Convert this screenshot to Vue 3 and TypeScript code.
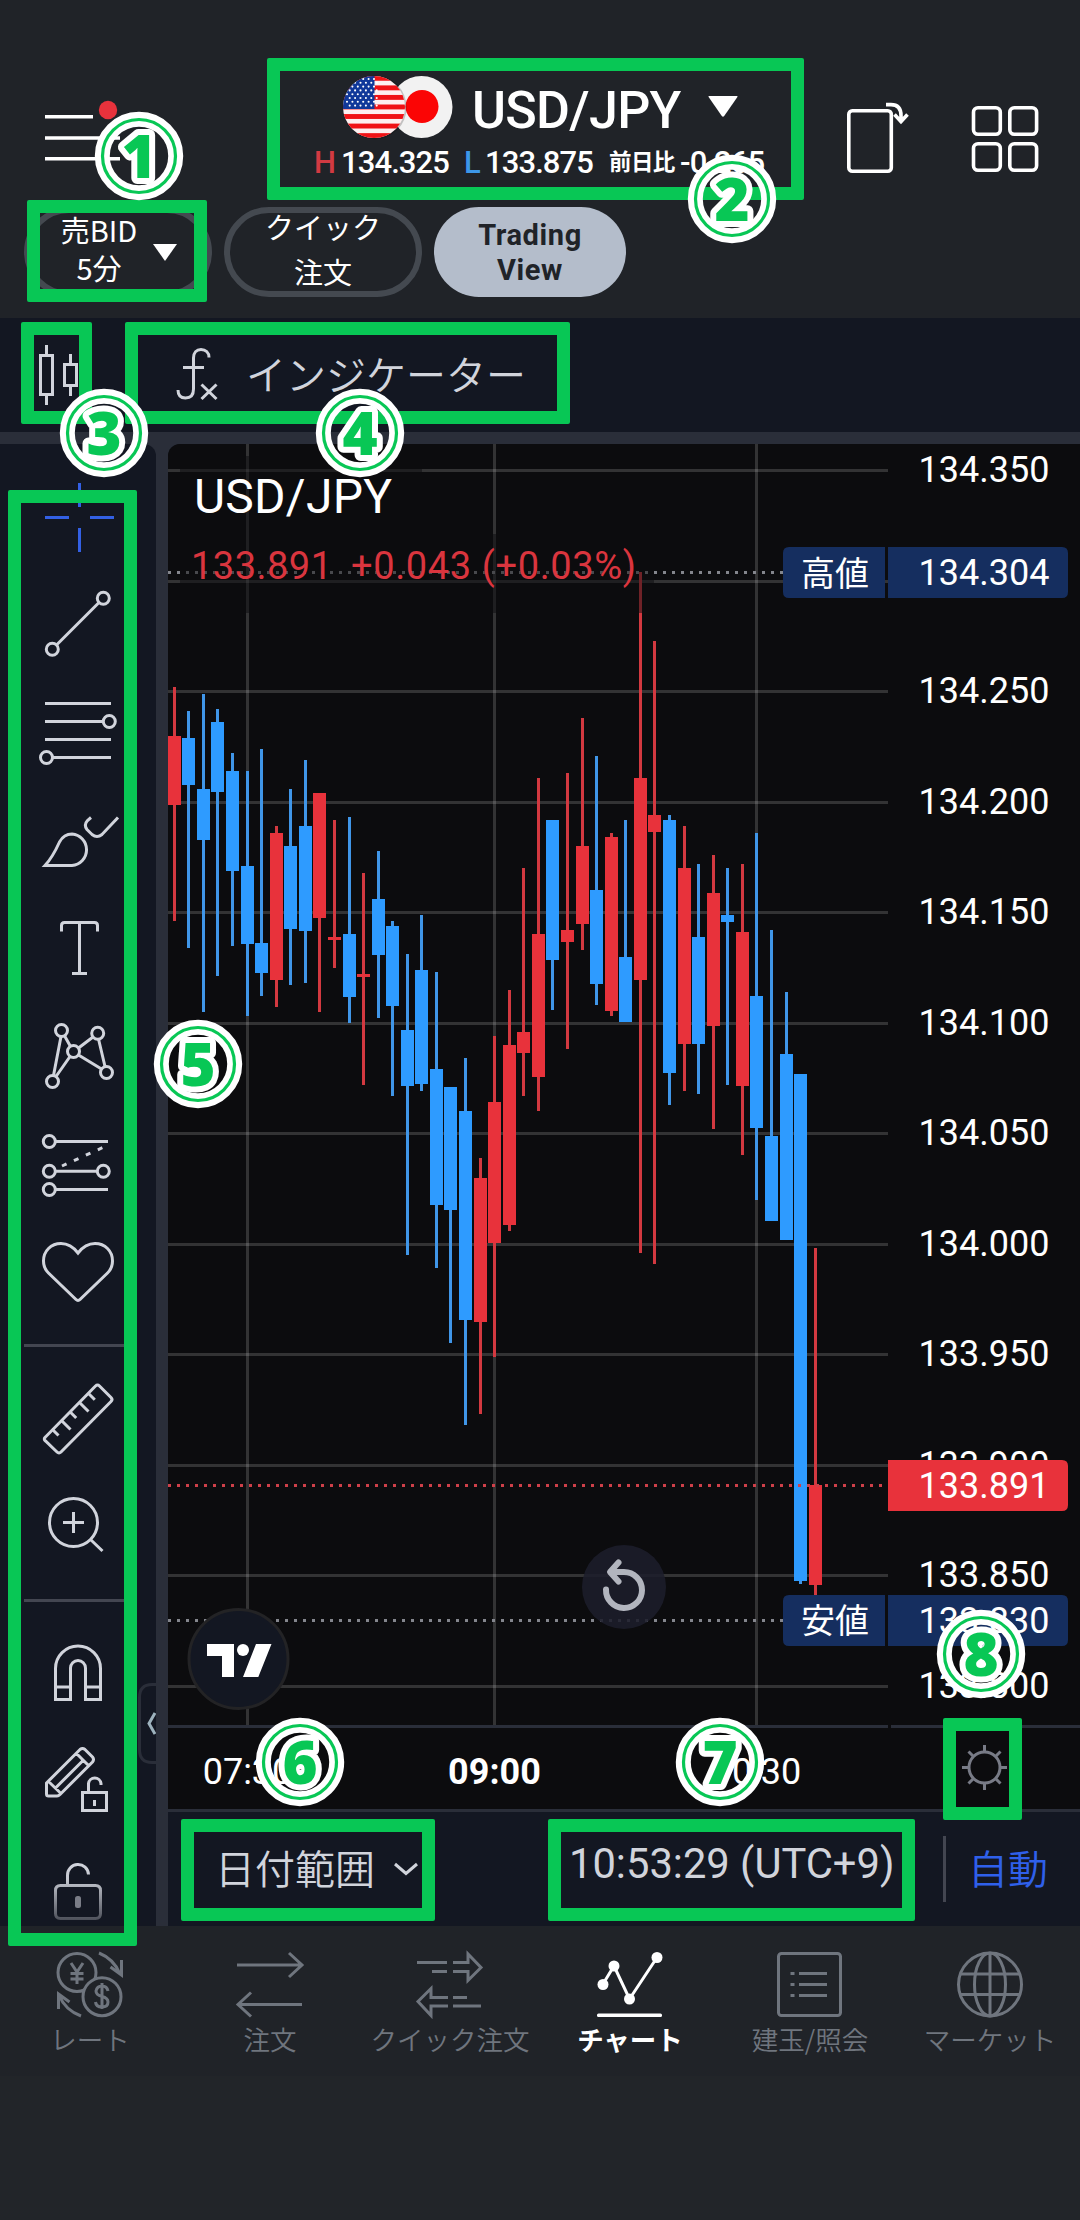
<script setup lang="ts">
type Candle = [x: number, high: number, top: number, bottom: number, low: number, up: 0 | 1]

const candles: Candle[] = [
  [174.5, 687, 736, 805, 921, 1], [188.5, 711, 738, 785, 948, 0], [203.5, 694, 789, 840, 1012, 0],
  [217.5, 709, 722, 792, 976, 0], [232.5, 753, 771, 871, 946, 0], [247.5, 771, 866, 944, 1016, 0],
  [261.5, 749, 943, 973, 996, 0], [276.5, 826, 833, 980, 1007, 1], [290.5, 789, 846, 929, 985, 0],
  [305.5, 760, 826, 931, 983, 0], [319.5, 793, 793, 918, 1012, 1], [334.5, 820, 937, 940, 968, 1],
  [349.5, 817, 934, 997, 1023, 0], [363.5, 873, 974, 977, 1085, 1], [378.5, 851, 899, 955, 1018, 0],
  [392.5, 921, 926, 1006, 1096, 0], [407.5, 954, 1030, 1086, 1255, 0], [421.5, 915, 970, 1084, 1091, 0],
  [436.5, 972, 1069, 1205, 1268, 0], [450.5, 1087, 1087, 1210, 1343, 0], [465.5, 1058, 1111, 1320, 1425, 0],
  [480.5, 1158, 1178, 1322, 1414, 1], [494.5, 1036, 1102, 1243, 1357, 1], [509.5, 990, 1045, 1225, 1231, 1],
  [523.5, 868, 1032, 1053, 1096, 1], [538.5, 778, 934, 1077, 1111, 1], [552.5, 820, 820, 960, 1010, 0],
  [567.5, 773, 930, 942, 1049, 1], [582.5, 718, 846, 924, 950, 1], [596.5, 756, 890, 984, 1005, 0],
  [611.5, 833, 837, 1011, 1016, 1], [625.5, 820, 957, 1022, 1022, 0], [640.5, 572, 778, 980, 1253, 1],
  [654.5, 641, 815, 832, 1264, 1], [669.5, 815, 820, 1073, 1105, 0], [684.5, 826, 868, 1044, 1091, 1],
  [698.5, 864, 937, 1044, 1094, 0], [713.5, 855, 893, 1026, 1129, 1], [727.5, 868, 915, 922, 1085, 0],
  [742.5, 864, 932, 1086, 1155, 1], [756.5, 833, 996, 1128, 1200, 0], [771.5, 930, 1136, 1221, 1221, 0],
  [786.5, 992, 1054, 1240, 1240, 0], [800.5, 1074, 1074, 1581, 1584, 0], [815.5, 1248, 1485, 1585, 1596, 1],
]

const prices: { y: number; label: string }[] = [
  { y: 470.5, label: '134.350' }, { y: 581.5, label: '' }, { y: 691.5, label: '134.250' },
  { y: 802.5, label: '134.200' }, { y: 912.5, label: '134.150' }, { y: 1023.5, label: '134.100' },
  { y: 1133.5, label: '134.050' }, { y: 1244.5, label: '134.000' }, { y: 1354.5, label: '133.950' },
  { y: 1465.5, label: '133.900' }, { y: 1575.5, label: '133.850' }, { y: 1686.5, label: '133.800' },
]
const times = [
  { x: 247.5, label: '07:30', bold: false },
  { x: 494.5, label: '09:00', bold: true },
  { x: 756.5, label: '10:30', bold: false },
]
const stars: [number, number][] = []
for (let r = 0; r < 8; r++) for (let c = 0; c < 6; c++) stars.push([347 + c * 5.4 + (r % 2) * 2.7, 79 + r * 3.8])

// x, y, width, height of each highlighted area
const frames = [
  [27, 200, 180, 102], [267, 58, 537, 142], [21, 322, 71, 102], [125, 322, 445, 102],
  [8, 490, 129, 1456], [181, 1819, 254, 102], [548, 1819, 367, 102], [943, 1718, 79, 102],
].map(([x, y, w, h]) => ({ left: x + 'px', top: y + 'px', width: w + 'px', height: h + 'px' }))
const badges: [number, number][] = [[139, 156], [732, 199], [104, 433], [360, 433], [198, 1064], [300, 1762], [720, 1762], [981, 1654]]
</script>

<template>
  <div class="screen">
    <header class="header">
      <div class="top">
        <svg class="menu" width="267" height="142" viewBox="0 58 267 142">
          <path d="M45 116.7H93M45 138H120M45 158.7H120" stroke="#fff" stroke-width="3.6" />
          <circle cx="108" cy="110" r="9.2" fill="#e8323c" />
        </svg>
        <div class="pair">
          <div class="pair-name">
            <svg width="118" height="70" viewBox="340 72 118 70">
              <defs><clipPath id="us"><circle cx="374" cy="107" r="31" /></clipPath></defs>
              <circle cx="421.5" cy="107" r="31" fill="#f2f2f2" />
              <circle cx="422" cy="106.5" r="16.5" fill="#fb0505" />
              <circle cx="374.6" cy="107.4" r="32" fill="#0003" />
              <g clip-path="url(#us)">
                <rect x="340" y="72" width="70" height="70" fill="#fdeff0" />
                <rect v-for="i in 7" :key="i" x="340" :y="66.3 + i * 9.55" width="70" height="4.9" fill="#f01216" />
                <rect x="340" y="72" width="34.5" height="37" fill="#10389a" />
                <circle v-for="(s, i) in stars" :key="i" :cx="s[0]" :cy="s[1]" r="1.05" fill="#fff" />
              </g>
            </svg>
            <span class="symbol">USD/JPY</span>
            <svg class="caret" width="30" height="21" viewBox="0 0 30 21"><path d="M1 0H29Q30 0 29.4 1L16.2 20Q15 21.4 13.8 20L.6 1Q0 0 1 0Z" fill="#fff" /></svg>
          </div>
          <div class="pair-stats">
            <span class="hi">H</span><span class="n1">134.325</span><span class="lo">L</span><span class="n2">133.875</span><span class="jp">前日比</span><span class="n3">-0.265</span>
          </div>
        </div>
        <svg width="276" height="142" viewBox="804 58 276 142" fill="none" stroke="#fff" stroke-width="3.6">
          <rect x="848.8" y="110.8" width="42.5" height="60.5" rx="3.5" />
          <path d="M886 104.6h5q10 0 10 11v5M894.5 114.5l6.5 7l6.5 -7" />
          <rect x="973.5" y="107.8" width="26.8" height="26.5" rx="4.5" /><rect x="1009.8" y="107.8" width="26.8" height="26.5" rx="4.5" />
          <rect x="973.5" y="143.8" width="26.8" height="26.5" rx="4.5" /><rect x="1009.8" y="143.8" width="26.8" height="26.5" rx="4.5" />
        </svg>
      </div>
      <div class="pills">
        <div class="pill p1">
          <span>売BID<br />5分</span>
          <svg width="24" height="17" viewBox="0 0 24 17"><path d="M0 0H24L12 17Z" fill="#fff" /></svg>
        </div>
        <div class="pill p2"><span>クイック<br />注文</span></div>
        <div class="pill p3">Trading<br />View</div>
      </div>
    </header>

    <div class="toolbar">
      <svg width="246" height="114" viewBox="0 318 246 114" fill="none" stroke="#d1d4dc" stroke-width="3">
        <path d="M40.5 355.5h12v39h-12zM46.5 345v9M46.5 396v9M64.5 364.5h12v21h-12zM70.5 354v9M70.5 387v9" />
        <path d="M209 357.500c0-5-3.500-8-8-8s-7.500 3-7.500 8.500v31c0 6-3 9-8 9s-7.500-3-7.500-8M183 367.500h21M201.500 384.500l15 14.500M216.500 384.500l-15 14.500" />
      </svg>
      <span>インジケーター</span>
    </div>

    <main class="main">
      <aside class="tools">
        <svg width="156" height="100" viewBox="0 444 156 100"><path d="M79.500 483v24M79.500 528v24M45 517.500h24M90 517.500h24" stroke="#3360e4" stroke-width="3" /></svg>
        <svg width="156" height="130" viewBox="0 544 156 130"><path d="M56.500 645L99 602.500" /><circle cx="103.300" cy="598.300" r="6" /><circle cx="52.300" cy="649.300" r="6" /></svg>
        <svg width="156" height="110" viewBox="0 674 156 110"><path d="M45 703.500h66M45 721.500h58M45 739.500h66M53 757.500h58" /><circle cx="109.300" cy="721.500" r="6" /><circle cx="46.500" cy="757.500" r="6" /></svg>
        <svg width="156" height="120" viewBox="0 784 156 120"><path d="M45 865.500C51 859 55 852 59.500 842C62.500 836.500 67 834 72 834A15.800 15.800 0 0 1 72 865.500ZM91 817.500L87.500 820.500Q83.500 825 87 829.500L92 834.500Q97 838.500 102 834.500L118 817.500" /></svg>
        <svg width="156" height="96" viewBox="0 904 156 96"><path d="M61.500 931.500v-6q0-3 3-3h30q3 0 3 3v6M79.500 922.500v51M72 973.500h15" /></svg>
        <svg width="156" height="110" viewBox="0 1000 156 110"><path d="M61 1036.500L53.500 1075.500M64.500 1035.700L70.500 1046.500M70 1056.500L56 1076.500M78.500 1048L93 1037M98.500 1039L105 1066.500M78.500 1055L101.500 1069" /><circle cx="61.500" cy="1030.500" r="6" /><circle cx="97.700" cy="1033.300" r="6" /><circle cx="73.500" cy="1051.500" r="6" /><circle cx="106.500" cy="1072.500" r="6" /><circle cx="52.500" cy="1081.500" r="6" /></svg>
        <svg width="156" height="110" viewBox="0 1110 156 110"><path d="M56 1141.500h52M56 1171.300h41M56 1189.500h52" /><path d="M62 1166L104 1147" stroke-dasharray="5 8.100" /><circle cx="49.300" cy="1141.500" r="6" /><circle cx="49.300" cy="1171.300" r="6" /><circle cx="103.300" cy="1171.300" r="6" /><circle cx="49.300" cy="1189.500" r="6" /></svg>
        <svg width="156" height="124" viewBox="0 1220 156 124"><path d="M78 1253C73 1246.500 67 1243.500 61 1243.500C51 1243.500 43.500 1251 43.500 1261C43.500 1266 45.500 1270 48.500 1273L76 1299.500Q78 1301.500 80 1299.500L107.500 1273C110.500 1270 112.500 1266 112.500 1261C112.500 1251 105 1243.500 95 1243.500C89 1243.500 83 1246.500 78 1253Z" /></svg>
        <i class="rule"></i>
        <svg width="156" height="123" viewBox="0 1347 156 123"><path d="M95.500 1386Q97.500 1384 99.500 1386L111 1397.500Q113 1399.500 111 1401.500L61 1452Q59 1454 57 1452L45.500 1441Q43 1439 45.500 1437ZM88.300 1393.300l6.500 6.500M79 1402l9.500 9.500M69.700 1411.500l6.500 6.500M61 1420l9.500 9.500M52 1429l6.500 6.500" /></svg>
        <svg width="156" height="129" viewBox="0 1470 156 129"><circle cx="73.500" cy="1522.500" r="24" /><path d="M63 1522.500h21M73.500 1512v21M91 1540l11.500 11" /></svg>
        <i class="rule"></i>
        <svg width="156" height="128" viewBox="0 1602 156 128"><path d="M55.500 1699.500V1668.500a22.500 22.500 0 0 1 45 0V1699.500H85.500V1668a7.500 7.500 0 0 0 -15 0V1699.500ZM55.500 1687h15M85.500 1687h15" /></svg>
        <svg width="156" height="110" viewBox="0 1730 156 110"><path d="M46.500 1783L80 1749.500Q82.500 1747.500 85 1749.500L92.500 1757Q94.500 1759.500 92.500 1762L60 1794.500Q58.500 1796 57 1796H48.500Q46.500 1796 46.500 1794ZM48.500 1781.500L61.500 1794M55.500 1788L83 1760.500M76.500 1753.500L89.500 1766.500M82.500 1792.500h24v18h-24zM88.500 1792v-8.500a6.300 6.300 0 0 1 12.500 0v1.500M94.500 1800v6" /></svg>
        <svg width="156" height="86" viewBox="0 1840 156 86"><defs><linearGradient id="fade" gradientUnits="userSpaceOnUse" x1="0" y1="1864" x2="0" y2="1924"><stop offset="0" stop-color="#d1d4dc" /><stop offset=".25" stop-color="#c5c8d0" /><stop offset="1" stop-color="#42454f" /></linearGradient></defs><path stroke="url(#fade)" d="M60.500 1885.500h35q5 0 5 5v23q0 5-5 5h-35q-5 0-5-5v-23q0-5 5-5zM67.500 1885V1875.500a10.500 10.500 0 0 1 21 -1" /><rect x="75" y="1896" width="6" height="12" rx="2.500" fill="#7a7d87" stroke="none" /></svg>
        <svg class="tab" width="18" height="84" viewBox="138 1681 18 84"><path d="M156 1684.500h-4q-12.500 0-12.500 13v52q0 13 12.500 13h4" stroke="#2a2e39" fill="#131722" /><path d="M155 1713l-6 10.500l6 10.500" stroke="#9db2bd" /></svg>
      </aside>

      <section class="board">
        <svg class="chart" width="912" height="1368" viewBox="168 444 912 1368">
          <rect x="168" y="444" width="912" height="1368" fill="#0c0c0e" />
          <g stroke="#fff" stroke-opacity=".16" stroke-width="3">
            <path v-for="p in prices" :key="p.y" :d="`M168 ${p.y}H888`" />
            <path v-for="t in times" :key="t.x" :d="`M${t.x} 444V1725`" />
          </g>
          <path d="M168 572.500H783" stroke="#84868d" stroke-width="3" stroke-dasharray="3 6" />
          <path d="M168 1620.500H783" stroke="#84868d" stroke-width="3" stroke-dasharray="3 6" />
          <g v-for="c in candles" :key="c[0]">
            <rect :x="c[0] - 1.5" :y="c[1]" width="3" :height="c[4] - c[1]" :fill="c[5] ? '#d33940' : '#4096e8'" />
            <rect :x="c[0] - 6.5" :y="c[2]" width="13" :height="c[3] - c[2]" :fill="c[5] ? '#e8323b' : '#2e9bff'" />
          </g>
          <path d="M168 1485.500H888" stroke="#cf4049" stroke-width="3" stroke-dasharray="3 6" />
          <path d="M180 456H422V534H654V613H180Z" fill="#0c0c0e" fill-opacity=".5" />
          <text x="194" y="512.500" font-size="48" fill="#fff" textLength="198">USD/JPY</text>
          <g font-size="38" fill="#da353e">
            <text x="191" y="578.500" textLength="141">133.891</text>
            <text x="351" y="578.500" textLength="285">+0.043 (+0.03%)</text>
          </g>
          <g font-size="36" fill="#fff" text-anchor="middle">
            <text v-for="p in prices" :key="p.y" x="984" :y="p.y + 11.5">{{ p.label }}</text>
            <path d="M789 547H885V598H789Q783 598 783 592V553Q783 547 789 547ZM888 547H1062Q1068 547 1068 553V592Q1068 598 1062 598H888Z" fill="#152e5f" />
            <path d="M789 1595H885V1646H789Q783 1646 783 1640V1601Q783 1595 789 1595ZM888 1595H1062Q1068 1595 1068 1601V1640Q1068 1646 1062 1646H888Z" fill="#152e5f" />
            <path d="M888 1460H1062Q1068 1460 1068 1466V1505Q1068 1511 1062 1511H888Z" fill="#e8323b" />
            <text x="984" y="585">134.304</text><text x="984" y="1632.500">133.830</text><text x="984" y="1498">133.891</text>
            <g font-size="34"><text x="835" y="585.500">高値</text><text x="835" y="1633">安値</text></g>
            <text v-for="t in times" :key="t.x" :x="t.x" y="1783.700" :font-weight="t.bold ? 700 : 400">{{ t.label }}</text>
          </g>
          <path d="M168 1726.500H888M891 1726.500H1080M168 1810.500H1080" stroke="#2a2e39" stroke-width="3" />
          <circle cx="624" cy="1587" r="42" fill="#1c1e2b" fill-opacity=".88" />
          <path d="M606 1589.500A18 18 0 1 0 624 1572H612M618.500 1562.500L610 1572L618.500 1581.500" fill="none" stroke="#b2b5be" stroke-width="6" stroke-linecap="round" stroke-linejoin="round" />
          <circle cx="238.500" cy="1659" r="49.500" fill="#131722" stroke="#232325" stroke-width="3" />
          <path d="M207 1644h27v33h-12v-21h-15zM256 1644h15.500L258.300 1677H243z" fill="#fff" /><circle cx="243" cy="1650" r="6" fill="#fff" />
          <g transform="translate(984.500 1767.500)" fill="none" stroke="#787b86" stroke-width="3">
            <circle r="15.500" /><path d="M0-15v-7.500M0 15v7.500M-15 0h-7.500M15 0h7.500M-11-11l-5-5M11-11l5-5M-11 11l-5 5M11 11l5 5" />
          </g>
        </svg>
        <div class="range">
          <span class="dates">日付範囲</span>
          <svg width="26" height="16" viewBox="0 0 26 16"><path d="M2 3l11 9.500l11-9.500" fill="none" stroke="#d1d4dc" stroke-width="3" /></svg>
          <span class="clock">10:53:29 (UTC+9)</span>
          <i></i>
          <span class="auto">自動</span>
        </div>
      </section>
    </main>

    <nav class="nav">
      <div class="item">
        <svg viewBox="50 1948 80 72">
          <circle cx="77" cy="1972.500" r="19" /><path d="M71 1963l6 9l6-9M77 1972v12M70.500 1973.500h13M70.500 1979h13" />
          <circle cx="102" cy="1996.700" r="19" fill="#202328" /><path d="M108 1991q-1-5-6-5t-6 5q0 4 6 5.500t6 5.500q0 5-6 5t-6.500-5M102 1983v26" />
          <path d="M99 1953q15 6 21 21M121.500 1960v15l-11-8M81 2016q-16-6-22-21M58.500 2009v-15l11 8" />
        </svg><span>レート</span>
      </div>
      <div class="item">
        <svg viewBox="230 1948 80 72"><path d="M237 1965h64M289 1953l13 12l-13 12M302 2004.500H239M251 1992.500l-13 12l13 12" /></svg><span>注文</span>
      </div>
      <div class="item">
        <svg viewBox="409 1948 80 72"><path d="M416 1962.500h30M431 1971.500h15M452 1962.500h15V1954l13 13.500l-13 13V1971.500h-15M480 2006h-28M466 1997.500h-14M447 2006h-17v9.500l-13-14l13-13v9h17" /></svg><span>クイック注文</span>
      </div>
      <div class="item on">
        <svg viewBox="590 1948 80 72"><path d="M603 1984l11-18l15.500 33L657 1957.500" /><g fill="#fff" stroke="none"><circle cx="603" cy="1984.500" r="5.500" /><circle cx="614" cy="1966" r="5.500" /><circle cx="629.500" cy="1999" r="5.500" /><circle cx="657" cy="1957.500" r="5.500" /><rect x="597" y="2013.500" width="65" height="3.500" rx="1.500" /></g></svg><span>チャート</span>
      </div>
      <div class="item">
        <svg viewBox="770 1948 80 72"><rect x="778.500" y="1953.500" width="62" height="62" rx="3" /><path d="M799 1973.500h28M799 1984.500h28M799 1995.500h28M790.500 1973.500h4M790.500 1984.500h4M790.500 1995.500h4" /></svg><span>建玉/照会</span>
      </div>
      <div class="item">
        <svg viewBox="949 1948 80 72"><circle cx="989" cy="1984.500" r="31.500" /><ellipse cx="989" cy="1984.500" rx="15.500" ry="31.500" /><path d="M989 1953v63M959.500 1974h59M959.500 1994.500h59" /></svg><span>マーケット</span>
      </div>
    </nav>

    <div v-for="(f, i) in frames" :key="'f' + i" class="frame" :style="f"></div>
    <svg v-for="(b, i) in badges" :key="'b' + i" class="badge" width="90" height="90" viewBox="-45 -45 90 90" :style="{ left: b[0] - 45 + 'px', top: b[1] - 45 + 'px' }">
      <circle r="36.700" fill="none" stroke="#fff" stroke-width="15" />
      <circle r="36.500" fill="none" stroke="#08c755" stroke-width="3.200" />
      <text y="21.500" text-anchor="middle">{{ i + 1 }}</text>
    </svg>
  </div>
</template>

<style scoped>
.screen { position: relative; width: 1080px; height: 2220px; overflow: hidden; background: #222529; color: #fff; font-family: Roboto, "Noto Sans CJK JP", sans-serif; }
svg { display: block; flex: none; }
.header { height: 318px; box-sizing: border-box; padding-top: 58px; background: #202328; }
.top { display: flex; height: 142px; }
.pair { width: 537px; }
.pair-name { display: flex; align-items: center; margin: 14px 0 0 73px; height: 70px; }
.symbol { width: 221px; margin: 7px 15px 0 14px; font-size: 52px; font-weight: 500; letter-spacing: -.7px; white-space: nowrap; }
.caret { margin-bottom: 2px; }
.pair-stats { display: flex; margin: 3px 0 0 47px; font-size: 31px; font-weight: 500; line-height: 36px; letter-spacing: -.9px; white-space: nowrap; }
.pair-stats .hi { width: 27px; color: #d23a42; }
.pair-stats .n1 { width: 123px; }
.pair-stats .lo { width: 21px; color: #3d97e8; }
.pair-stats .n2 { width: 124px; }
.pair-stats .jp { width: 71px; font-size: 22.500px; font-weight: 700; letter-spacing: -.6px; line-height: 35px; }
.pills { display: flex; margin: 7px 0 0 24px; height: 90px; font-family: "Noto Sans CJK JP", sans-serif; font-size: 29px; text-align: center; }
.pill { box-sizing: border-box; height: 90px; border: 6px solid #444950; border-radius: 45px; }
.p1 { width: 188px; display: flex; align-items: center; line-height: 38px; margin-right: 12px; }
.p1 span { margin: 0 14px 8px 29px; width: 80px; white-space: nowrap; }
.p2 { width: 198px; display: flex; justify-content: center; align-items: flex-start; line-height: 44.500px; margin-right: 12px; }
.p2 span { margin-top: -9px; }
.p3 { width: 192px; border: 0; background: #b4bdcb; color: #202328; font-family: Roboto, sans-serif; font-weight: 700; font-size: 29px; letter-spacing: .6px; line-height: 35px; padding-top: 11px; }
.toolbar { display: flex; align-items: center; height: 114px; background: #131722; border-bottom: 12px solid #2a2e39; color: #d1d4dc; font-family: "Noto Sans CJK JP", sans-serif; font-size: 40px; font-weight: 350; }
.toolbar span { margin-top: -4px; }
.main { display: flex; height: 1482px; background: #2a2e39; }
.tools { position: relative; width: 156px; margin-right: 12px; background: #131722; border-top-right-radius: 12px; }
.tools svg { fill: none; stroke: #d1d4dc; stroke-width: 3; overflow: visible; }
.rule { display: block; width: 108px; height: 3px; margin-left: 24px; background: #434651; }
.tools .tab { position: absolute; left: 138px; top: 1237px; overflow: hidden; }
.board { width: 912px; border-top-left-radius: 12px; overflow: hidden; background: #131722; }
.range { display: flex; align-items: center; height: 114px; padding-left: 47px; color: #d1d4dc; font-size: 40px; white-space: nowrap; }
.range svg { margin-left: 16px; }
.range .dates { width: 162px; margin-top: -4px; font-weight: 350; font-family: "Noto Sans CJK JP", sans-serif; }
.range .clock { width: 373px; margin: -11px 0 0 150px; font-size: 41.700px; }
.range i { flex: none; width: 3px; height: 66px; background: #434651; margin-left: 1px; }
.range .auto { margin: -4px 0 0 22px; color: #2f60ea; font-weight: 350; font-family: "Noto Sans CJK JP", sans-serif; }
.nav { display: flex; height: 150px; background: #202328; color: #6f757e; font-family: "Noto Sans CJK JP", sans-serif; font-size: 26.500px; }
.item { width: 180px; display: flex; flex-direction: column; align-items: center; padding-top: 22px; white-space: nowrap; }
.item svg { width: 80px; height: 72px; fill: none; stroke: #6f757e; stroke-width: 3; }
.item span { line-height: 38px; font-weight: 350; }
.item.on { color: #fff; }
.item.on svg { stroke: #fff; }
.item.on span { font-weight: 700; }
.frame { position: absolute; box-sizing: border-box; border: 13px solid #08c755; border-radius: 2px; }
.badge { position: absolute; }
.badge text { font: 900 60px "Noto Sans", sans-serif; fill: #08c755; stroke: #fff; stroke-width: 12px; stroke-linejoin: round; paint-order: stroke; }
</style>

<style>
body { background: #222529; }
</style>
